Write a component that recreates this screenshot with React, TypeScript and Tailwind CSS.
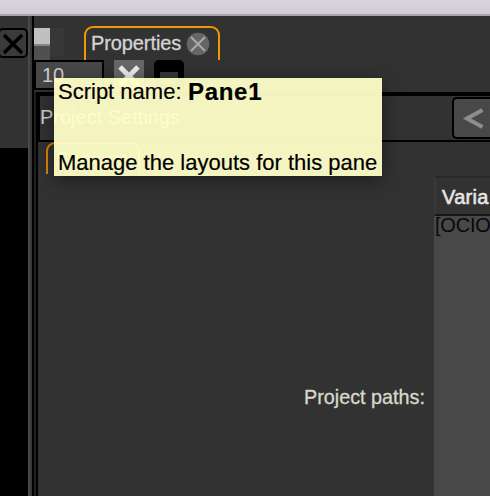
import React from "react";

function CloseBox() {
  return (
    <svg className="mt-3 block" width="28" height="30" viewBox="0 0 28 30">
      <rect x="-1" y="1" width="28" height="28" rx="4" fill="#3a3a3a" stroke="#000" strokeWidth="2" />
      <path d="M4 7 L22 25 M22 7 L4 25" stroke="#000" strokeWidth="3.6" />
    </svg>
  );
}

function PropertiesTab() {
  return (
    <div className="ml-[33px] mt-[10px] flex h-[34px] w-[136px] rounded-t-[9px] border-2 border-b-0 border-[#f09609] bg-[#323232]">
      <span className="ml-[5px] mt-[3px] w-[91px] whitespace-nowrap text-[20px] leading-6 tracking-[-0.1px] text-[#d4d4d4] [-webkit-text-stroke:0.3px_#d4d4d4]">Properties</span>
      <svg className="ml-[4px] mt-[4px]" width="24" height="24" viewBox="0 0 24 24">
        <circle cx="12" cy="12" r="11.3" fill="#666" />
        <path d="M5 5 L19 19 M19 5 L5 19" stroke="#aaa" strokeWidth="2" />
      </svg>
    </div>
  );
}

function Toolbar() {
  return (
    <div className="flex h-8">
      <div className="h-[30px] w-[70px] border-2 border-black bg-[#484848] pl-[6px] text-[20px] leading-[26px] text-[#cfcfcf]">10</div>
      <svg className="ml-[10px]" width="30" height="30" viewBox="0 0 30 30">
        <rect width="30" height="30" fill="#686868" />
        <path d="M6 7 L24 25 M24 7 L6 25" stroke="#eee" strokeWidth="5" />
      </svg>
      <div className="ml-[10px] h-[30px] w-[30px] rounded-t-[5px] bg-black px-1.5 pt-3">
        <div className="h-3 bg-[#383838]" />
      </div>
    </div>
  );
}

function SettingsPane() {
  return (
    <div className="flex flex-1">
      <div className="w-0.5 bg-[#202020]" />
      <section className="flex flex-1 flex-col border-l-2 border-t-4 border-black bg-[#323232]">
        <div className="flex h-[46px] shrink-0 justify-between border-b-2 border-l-2 border-black">
          <span className="mt-[9px] whitespace-nowrap text-[20px] leading-6 text-[#d0d0d0]">Project Settings</span>
          <div className="mt-[1px] flex h-[42px] w-[38px] rounded-l-[5px] border-2 border-r-0 border-black bg-[#484848]">
            <svg className="ml-[8px] mt-[8px]" width="22" height="24" viewBox="0 0 22 24">
              <path d="M20.5 3 L5 11.5 L20.5 20" fill="none" stroke="#8d8d8d" strokeWidth="4" />
            </svg>
          </div>
        </div>
        <div className="flex flex-1">
          <div className="w-[396px]">
            <div className="ml-2 flex h-8 text-[20px] leading-6 text-[#a0a0a0]">
              <div className="w-[94px] rounded-t-[9px] border-2 border-b-0 border-[#dc8805] pl-2 pt-[3px]">Settings</div>
              <div className="ml-6 w-[76px] pt-[5px] text-[#686868]">Info</div>
              <div className="pt-[5px] text-[#686868]">Python</div>
            </div>
            <div className="mt-[211px] pr-[9px] text-right text-[19.8px] leading-6 text-[#d8d8cc] [-webkit-text-stroke:0.3px_#d8d8cc]">Project paths:</div>
          </div>
          <div className="mt-[34px] flex w-[56px] flex-col overflow-hidden bg-[#484848]">
            <div className="h-10 shrink-0 border-b-2 border-l-2 border-t-2 border-b-[#151515] border-l-[#393939] border-t-[#292929] bg-[#323232] pl-[6px] pt-[7px] text-[20px] leading-6 tracking-[0.3px] text-[#e5e5e5] [-webkit-text-stroke:0.6px_#e5e5e5]">Varia</div>
            <div className="pl-px whitespace-nowrap text-[20px] leading-[18px] tracking-[-0.2px] text-[#080808]">[OCIO</div>
          </div>
        </div>
      </section>
    </div>
  );
}

export default function App() {
  return (
    <main className="relative flex h-[496px] w-[490px] flex-col overflow-hidden bg-[#323232] font-['Liberation_Sans',Arial,sans-serif]">
      <div className="h-4 shrink-0 border-b-2 border-[#a9a5aa] bg-linear-to-b from-[#dad4dc] to-[#d2ccd4]" />
      <div className="flex flex-1">
        <aside className="flex w-7 flex-col">
          <div className="h-[132px]"><CloseBox /></div>
          <div className="flex-1 bg-black" />
        </aside>
        <div className="w-1 border-l-2 border-[#484848] bg-[#383838]" />
        <div className="w-0.5 bg-black" />
        <div className="flex flex-1 flex-col">
          <div className="flex h-11 shrink-0">
            <div className="mt-3 h-8 w-4">
              <div className="h-4 bg-[#c0c0c0]" />
              <div className="h-4 border-t-2 border-[#858585] bg-[#505050]" />
            </div>
            <div className="mt-3 h-7 w-[14px] bg-[#373737]" />
            <div className="-ml-[13px]"><PropertiesTab /></div>
          </div>
          <Toolbar />
          <SettingsPane />
        </div>
      </div>
      <div className="absolute left-[54px] top-[78px] h-[98px] w-[328px] whitespace-nowrap bg-[#ffffc8]/95 text-[22px] text-black shadow-[0_4px_18px_rgba(0,0,0,0.45)]">
        <div className="ml-1 mt-[2px] flex h-6 leading-6 [-webkit-text-stroke:0.2px_black]">
          <span className="w-[130px]">Script name:</span><b className="text-[24px] tracking-[0.7px]">Pane1</b>
        </div>
        <div className="ml-1 mt-[47px] leading-6 [-webkit-text-stroke:0.2px_black]">Manage the layouts for this pane</div>
      </div>
    </main>
  );
}
